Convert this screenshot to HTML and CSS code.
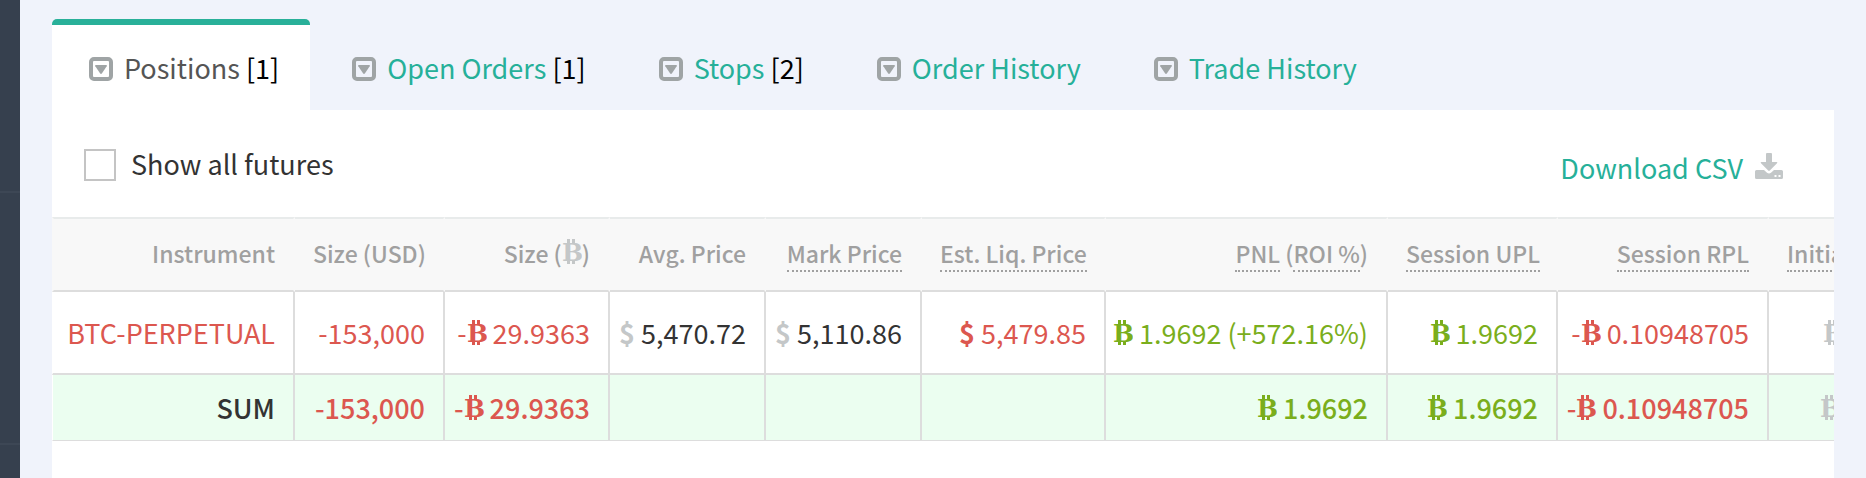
FILE: index.html
```html
<!DOCTYPE html>
<html lang="en">
<head>
    <meta charset="UTF-8">
    <meta name="viewport" content="width=device-width, initial-scale=1.0">
    <title>Positions</title>
    <link rel="stylesheet" href="styles.css">
</head>
<body>
    <!-- Shared icons -->
    <svg class="sprite" aria-hidden="true">
        <symbol id="icon-btc" viewBox="0 0 20 26">
            <text class="btc-letter" x="0" y="22">B</text>
            <path d="M5 0h3v5H5zM10 0h3v5h-3zM5 21h3v4H5zM10 21h3v4h-3z"/>
        </symbol>
        <symbol id="icon-caret" viewBox="0 0 24 24">
            <rect x="2" y="2" width="20" height="20" rx="3" fill="none" stroke="currentColor" stroke-width="4"/>
            <path d="M7 8h10q1.500 0 .7 1.300l-4.700 7q-1 1.300-2 0l-4.700-7Q5.500 8 7 8z"/>
        </symbol>
        <symbol id="icon-download" viewBox="0 0 28 26">
            <path d="M12 0h4q1 0 1 1v8h4.500q1.500 0 .5 1.200l-7.200 7.400q-.8.800-1.600 0L6 10.200Q5 9 6.500 9H11V1q0-1 1-1z"/>
            <path fill-rule="evenodd" d="M1.500 17H9l3 2.800q2 1.600 4 0L19 17h7.500q1.500 0 1.500 1.500v6q0 1.500-1.500 1.500h-25Q0 26 0 24.500v-6Q0 17 1.500 17zM19.500 22v2h2v-2zM23.500 22v2h2v-2z"/>
        </symbol>
    </svg>

    <div class="page">
        <aside class="sidebar">
            <div class="sidebar-item sidebar-item-first"></div>
            <div class="sidebar-item"></div>
        </aside>

        <main class="content">
            <nav class="tabs">
                <a class="tab active" href="#positions"><svg class="icon-caret"><use href="#icon-caret"/></svg><span>Positions <span class="count">[1]</span></span></a>
                <a class="tab" href="#open-orders"><svg class="icon-caret"><use href="#icon-caret"/></svg><span>Open Orders <span class="count">[1]</span></span></a>
                <a class="tab" href="#stops"><svg class="icon-caret"><use href="#icon-caret"/></svg><span>Stops <span class="count">[2]</span></span></a>
                <a class="tab" href="#order-history"><svg class="icon-caret"><use href="#icon-caret"/></svg><span>Order History</span></a>
                <a class="tab" href="#trade-history"><svg class="icon-caret"><use href="#icon-caret"/></svg><span>Trade History</span></a>
            </nav>

            <section class="panel">
                <div class="toolbar">
                    <label class="show-all" for="show-all"><input type="checkbox" id="show-all">Show all futures</label>
                    <a class="download" href="#csv">Download CSV<svg class="icon-download"><use href="#icon-download"/></svg></a>
                </div>

                <div class="table-wrap">
                    <table class="positions">
                        <colgroup>
                            <col class="col-instrument">
                            <col class="col-size-usd">
                            <col class="col-size-btc">
                            <col class="col-price">
                            <col class="col-price">
                            <col class="col-liq">
                            <col class="col-pnl">
                            <col class="col-upl">
                            <col class="col-rpl">
                            <col class="col-margin">
                        </colgroup>
                        <thead>
                            <tr>
                                <th>Instrument</th>
                                <th>Size (USD)</th>
                                <th>Size (<svg class="icon-btc muted"><use href="#icon-btc"/></svg>)</th>
                                <th>Avg. Price</th>
                                <th><span class="hint">Mark Price</span></th>
                                <th><span class="hint">Est. Liq. Price</span></th>
                                <th><span class="hint">PNL</span> (<span class="hint">ROI %</span>)</th>
                                <th><span class="hint">Session UPL</span></th>
                                <th><span class="hint">Session RPL</span></th>
                                <th><span class="hint">Initial Margin</span></th>
                            </tr>
                        </thead>
                        <tbody>
                            <tr>
                                <td class="red">BTC-PERPETUAL</td>
                                <td class="red">-153,000</td>
                                <td class="red">-<svg class="icon-btc"><use href="#icon-btc"/></svg> 29.9363</td>
                                <td><span class="usd muted">$</span> 5,470.72</td>
                                <td><span class="usd muted">$</span> 5,110.86</td>
                                <td class="red"><span class="usd">$</span> 5,479.85</td>
                                <td class="green"><svg class="icon-btc"><use href="#icon-btc"/></svg> 1.9692 (+572.16%)</td>
                                <td class="green"><svg class="icon-btc"><use href="#icon-btc"/></svg> 1.9692</td>
                                <td class="red">-<svg class="icon-btc"><use href="#icon-btc"/></svg> 0.10948705</td>
                                <td><svg class="icon-btc muted"><use href="#icon-btc"/></svg> 0.0000</td>
                            </tr>
                            <tr class="sum">
                                <td>SUM</td>
                                <td class="red">-153,000</td>
                                <td class="red">-<svg class="icon-btc"><use href="#icon-btc"/></svg> 29.9363</td>
                                <td></td>
                                <td></td>
                                <td></td>
                                <td class="green"><svg class="icon-btc"><use href="#icon-btc"/></svg> 1.9692</td>
                                <td class="green"><svg class="icon-btc"><use href="#icon-btc"/></svg> 1.9692</td>
                                <td class="red">-<svg class="icon-btc"><use href="#icon-btc"/></svg> 0.10948705</td>
                                <td><svg class="icon-btc muted"><use href="#icon-btc"/></svg> 0.0000</td>
                            </tr>
                        </tbody>
                    </table>
                </div>
            </section>
        </main>
    </div>
</body>
</html>
```
FILE: styles.css
```css
* {
    box-sizing: border-box;
}

body {
    margin: 0;
    background-color: #f0f3fb;
    font-family: "Noto Sans CJK SC", "Noto Sans", sans-serif;
    font-size: 27px;
    line-height: 40px;
    color: #333;
}

a {
    color: #26b099;
    text-decoration: none;
}

svg {
    fill: currentColor;
}

.sprite {
    display: none;
}

.page {
    display: flex;
    min-height: 100vh;
}

/* Sidebar */
.sidebar {
    width: 20px;
    flex-shrink: 0;
    background-color: #36404e;
}

.sidebar-item {
    height: 252px;
    border-bottom: 2px solid #3d4755;
}

.sidebar-item-first {
    height: 193px;
}

.content {
    flex: 1;
    min-width: 0;
    display: flex;
    flex-direction: column;
    padding: 19px 32px 0;
}

/* Tabs */
.tabs {
    display: flex;
    gap: 5px;
}

.tab {
    display: flex;
    align-items: center;
    gap: 11px;
    height: 91px;
    padding: 0 31px 0 37px;
    border-top: 6px solid transparent;
    border-radius: 5px 5px 0 0;
    white-space: nowrap;
}

.tab.active {
    background-color: #fff;
    border-top-color: #29b099;
    color: #555;
}

.count {
    color: #000;
}

.icon-caret {
    width: 24px;
    height: 24px;
    margin-top: 2px;
    color: #9fa4a5;
}

/* Panel */
.panel {
    flex: 1;
    background-color: #fff;
}

.toolbar {
    display: flex;
    justify-content: space-between;
    align-items: flex-start;
    height: 107px;
    padding: 34px 51px 0 32px;
}

.show-all {
    display: flex;
    align-items: center;
    gap: 15px;
}

.show-all input {
    appearance: none;
    width: 32px;
    height: 32px;
    margin: 2px 0 0;
    border: 2px solid #c4c4c4;
    background-color: #fff;
}

.download {
    display: flex;
    align-items: center;
    gap: 12px;
    padding-top: 4px;
}

.icon-download {
    width: 28px;
    height: 26px;
    margin-bottom: 4px;
    color: #c3c7c8;
}

/* Table */
.table-wrap {
    overflow: hidden;
}

.positions {
    width: 1899px;
    table-layout: fixed;
    border-collapse: separate;
    border-spacing: 0;
    text-align: right;
    white-space: nowrap;
}

.col-instrument { width: 243px; }
.col-size-usd { width: 150px; }
.col-size-btc { width: 165px; }
.col-price { width: 156px; }
.col-liq { width: 184px; }
.col-pnl { width: 282px; }
.col-upl { width: 170px; }
.col-rpl { width: 211px; }
.col-margin { width: 182px; }

.positions th {
    height: 75px;
    padding: 0 18px 3px;
    border-top: 2px solid #e8ebeb;
    border-right: 2px solid #f8f8f8;
    border-bottom: 2px solid #ddd;
    background-color: #f8f8f8;
    color: #a0a0a0;
    font-size: 23px;
    font-weight: 500;
}

.positions th:first-child {
    border-left: 2px solid #f8f8f8;
}

.positions td {
    height: 83px;
    padding: 0 18px 0 6px;
    border-right: 2px solid #ddd;
    border-bottom: 2px solid #ddd;
}

.positions td:first-child {
    border-left: 1px solid #fff;
}

.positions .sum td {
    height: 66px;
    border-bottom: 1px solid #ddd;
    background-color: #ebfef0;
    font-weight: 500;
}

.hint {
    border-bottom: 2px dotted #a0a0a0;
}

.icon-btc {
    width: 20px;
    height: 26px;
    vertical-align: -2px;
}

.btc-letter {
    font-family: "DejaVu Serif", serif;
    font-size: 25px;
    font-weight: bold;
}

.usd {
    font-weight: bold;
}

.positions .red {
    color: #dc574f;
}

.positions .green {
    color: #7aae1c;
}

.positions .muted {
    color: #c4c7c8;
}
```
